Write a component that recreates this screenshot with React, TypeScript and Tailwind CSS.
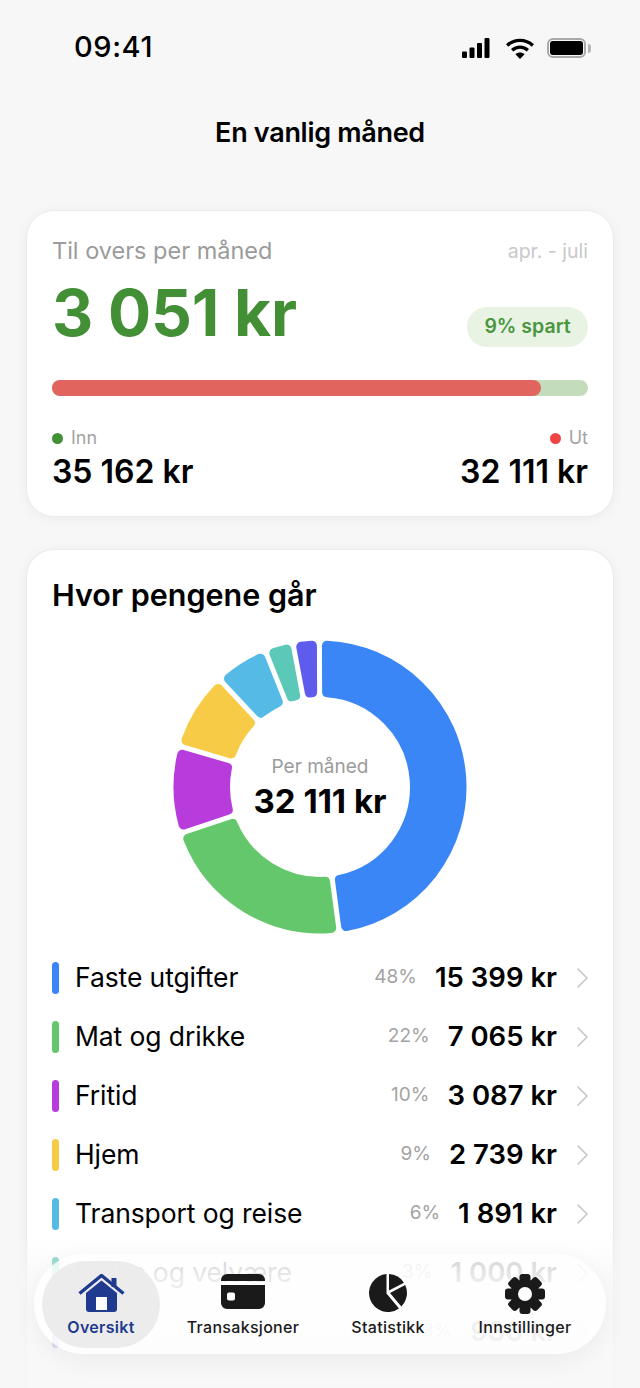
import React from 'react';

const categories = [
  { name: 'Faste utgifter', percent: '48%', amount: 15399, label: '15 399 kr', color: '#3b86f7', bar: 'bg-[#3b86f7]' },
  { name: 'Mat og drikke', percent: '22%', amount: 7065, label: '7 065 kr', color: '#65c76b', bar: 'bg-[#65c76b]' },
  { name: 'Fritid', percent: '10%', amount: 3087, label: '3 087 kr', color: '#b83bdb', bar: 'bg-[#b83bdb]' },
  { name: 'Hjem', percent: '9%', amount: 2739, label: '2 739 kr', color: '#f8cb46', bar: 'bg-[#f8cb46]' },
  { name: 'Transport og reise', percent: '6%', amount: 1891, label: '1 891 kr', color: '#55bbe6', bar: 'bg-[#55bbe6]' },
  { name: 'Helse og velvære', percent: '3%', amount: 1000, label: '1 000 kr', color: '#5cc8b8', bar: 'bg-[#5cc8b8]' },
  { name: 'Abo', percent: '3%', amount: 930, label: '930 kr', color: '#5e5ced', bar: 'bg-[#5e5ced]' },
];

const CX = 150;
const CY = 150;

function point(r: number, a: number) {
  return `${(CX + r * Math.sin(a)).toFixed(2)} ${(CY - r * Math.cos(a)).toFixed(2)}`;
}

// annular slice, pulled in so the round stroke gives soft corners
function slice(start: number, end: number) {
  const outer = 141.5;
  const inner = 95;
  const inset = 7.5;
  const a0 = start + Math.asin(inset / outer);
  const a1 = end - Math.asin(inset / outer);
  const b0 = start + Math.asin(inset / inner);
  const b1 = end - Math.asin(inset / inner);
  const large = a1 - a0 > Math.PI ? 1 : 0;
  return `M${point(outer, a0)} A${outer} ${outer} 0 ${large} 1 ${point(outer, a1)} L${point(inner, b1)} A${inner} ${inner} 0 ${large} 0 ${point(inner, b0)} Z`;
}

function Donut() {
  const total = categories.reduce((sum, c) => sum + c.amount, 0);
  let angle = -0.004;
  return (
    <svg width="300" height="300" viewBox="0 0 300 300">
      {categories.map((c) => {
        const start = angle;
        angle += (c.amount / total) * Math.PI * 2;
        return (
          <path key={c.name} d={slice(start, angle)} fill={c.color} stroke={c.color} strokeWidth="10" strokeLinejoin="round" />
        );
      })}
    </svg>
  );
}

function StatusIcons() {
  return (
    <div className="flex items-center">
      <svg width="28" height="20" viewBox="0 0 28 20" className="fill-black">
        <rect x="0" y="13.5" width="5" height="6.5" rx="1" />
        <rect x="7.5" y="9.5" width="5" height="10.5" rx="1" />
        <rect x="15" y="5" width="5" height="15" rx="1" />
        <rect x="22.5" y="0" width="5" height="20" rx="1" />
      </svg>
      <svg width="30" height="22" viewBox="0 0 32 24" fill="none" className="ml-[15px]">
        <path d="M2 9.2C9.8 1.8 22.2 1.8 30 9.2" stroke="#000" strokeWidth="3.6" />
        <path d="M7.4 14.4C12.2 9.9 19.8 9.9 24.6 14.4" stroke="#000" strokeWidth="3.6" />
        <path d="M16 24l-5-5.2c2.8-2.6 7.2-2.6 10 0z" fill="#000" />
      </svg>
      <div className="ml-[12px] flex items-center gap-[2px]">
        <div className="flex h-[20px] w-[39px] items-center justify-center rounded-[6px] border-2 border-[#a9a9a9]">
          <div className="h-[14px] w-[33px] rounded-[3px] bg-black" />
        </div>
        <div className="h-[9px] w-[3px] rounded-r-sm bg-[#b5b5b5]" />
      </div>
    </div>
  );
}

function HomeIcon() {
  return (
    <svg width="47" height="38" viewBox="0 0 47 38" fill="#1f3a8f">
      <path d="M1.5 19.5 L23.5 1.5 L45.5 19.5" fill="none" stroke="#1f3a8f" strokeWidth="3.4" />
      <rect x="33.5" y="4" width="5" height="9" />
      <path d="M23.5 6.5 L39 19 V35 a3 3 0 0 1 -3 3 H11 a3 3 0 0 1 -3 -3 V19 Z" />
      <rect x="18" y="23" width="11" height="13" fill="#ffffff" />
    </svg>
  );
}

function CardIcon() {
  return (
    <svg width="44" height="35" viewBox="0 0 44 35">
      <path d="M0 6a6 6 0 0 1 6-6h32a6 6 0 0 1 6 6v1H0z" fill="#1a1a1a" />
      <path fillRule="evenodd" d="M0 11h44v18a6 6 0 0 1-6 6H6a6 6 0 0 1-6-6z M6 20.5a2 2 0 0 1 2-2h4a2 2 0 0 1 2 2v4a2 2 0 0 1-2 2H8a2 2 0 0 1-2-2z" fill="#1a1a1a" />
    </svg>
  );
}

function PieIcon() {
  return (
    <svg width="38" height="38" viewBox="0 0 38 38" fill="#1a1a1a">
      <path d="M17.5 0.06 V19.6 L30 34.5 A19 19 0 1 1 17.5 0.06 Z" />
      <path d="M20 0.03 A19 19 0 0 1 35 8.7 L20 16.5 Z" />
      <path d="M36.2 11 A19 19 0 0 1 32.3 32.5 L21 19 Z" />
    </svg>
  );
}

function GearIcon() {
  return (
    <svg width="40" height="40" viewBox="0 0 40 40" fill="#1a1a1a">
      {[0, 45, 90, 135, 180, 225, 270, 315].map((deg) => (
        <rect key={deg} x="14.5" y="0" width="11" height="12" rx="3" transform={`rotate(${deg} 20 20)`} />
      ))}
      <circle cx="20" cy="20" r="14.5" />
      <circle cx="20" cy="20" r="7" fill="#ffffff" />
    </svg>
  );
}

function Chevron() {
  return (
    <svg width="11" height="20" viewBox="0 0 11 20" fill="none" className="ml-[20px]">
      <path d="M1 1 L10 10 L1 19" stroke="#c4c4c4" strokeWidth="1.5" strokeLinecap="round" strokeLinejoin="round" />
    </svg>
  );
}

export default function App() {
  return (
    <div
      className="relative h-[1388px] w-[640px] overflow-hidden bg-[#f7f7f7] text-black"
      style={{ fontFamily: 'Inter, "Noto Sans", sans-serif' }}
    >
      <div className="flex h-[94px] items-start justify-between pl-[74px] pr-[49px] pt-[30px]">
        <span className="text-[29px] leading-[34px] font-medium tracking-[0.6px]">09:41</span>
        <div className="mt-[7px]">
          <StatusIcons />
        </div>
      </div>
      <h1 className="text-center text-[27px] leading-[78px] font-semibold tracking-[-0.3px]">En vanlig måned</h1>

      <div className="mx-[26px] mt-[38px] h-[307px] rounded-[28px] border border-[#ebebeb] bg-white px-[25px] pt-[24px] shadow-[0_2px_12px_rgba(0,0,0,0.05)]">
        <div className="flex items-center justify-between">
          <span className="text-[23.5px] leading-[32px] text-[#9b9b9b]">Til overs per måned</span>
          <span className="text-[19.5px] leading-[32px] text-[#c9c9c9]">apr. - juli</span>
        </div>
        <div className="mt-[8px] flex items-end justify-between">
          <span className="text-[64px] leading-[76px] font-bold tracking-[-0.2px] text-[#428f35]">3 051 kr</span>
          <span className="mb-[4px] flex h-[40px] w-[121px] items-center justify-center rounded-full bg-[#e8f3e3] text-[19.5px] font-semibold text-[#4a9640]">9% spart</span>
        </div>
        <div className="mt-[29px] h-[16px] rounded-full bg-[#c3dcbb]">
          <div className="h-full w-[489px] rounded-full bg-[#e2645e]" />
        </div>
        <div className="mt-[28px] flex justify-between">
          <div>
            <div className="flex items-center gap-[8px]">
              <span className="h-[11px] w-[11px] rounded-full bg-[#428f35]" />
              <span className="text-[18px] leading-[28px] text-[#a3a3a3]">Inn</span>
            </div>
            <div className="mt-[1px] text-[32px] leading-[38px] font-semibold">35 162 kr</div>
          </div>
          <div className="flex flex-col items-end">
            <div className="flex items-center gap-[8px]">
              <span className="h-[11px] w-[11px] rounded-full bg-[#ef4444]" />
              <span className="text-[18px] leading-[28px] text-[#a3a3a3]">Ut</span>
            </div>
            <div className="mt-[1px] text-[32px] leading-[38px] font-semibold">32 111 kr</div>
          </div>
        </div>
      </div>

      <div className="mx-[26px] mt-[32px] h-[900px] rounded-[28px] border border-[#ebebeb] bg-white px-[25px] pt-[26px] shadow-[0_2px_12px_rgba(0,0,0,0.05)]">
        <h2 className="text-[30.5px] leading-[38px] font-semibold">Hvor pengene går</h2>
        <div className="relative mx-auto mt-[23px] h-[300px] w-[300px]">
          <Donut />
          <div className="absolute inset-0 flex flex-col items-center justify-center pt-[2px]">
            <span className="text-[19px] leading-[26px] text-[#9b9b9b]">Per måned</span>
            <span className="text-[33px] leading-[42px] font-bold">32 111 kr</span>
          </div>
        </div>
        <ul className="mt-[11px]">
          {categories.map((c) => (
            <li key={c.name} className="flex h-[59px] items-center">
              <span className={`h-[32px] w-[7px] rounded-full ${c.bar}`} />
              <span className="ml-[16px] flex-1 text-[26.5px] tracking-[-0.1px]">{c.name}</span>
              <span className="mr-[18px] text-[19px] text-[#a3a3a3]">{c.percent}</span>
              <span className="text-[27.5px] font-semibold">{c.label}</span>
              <Chevron />
            </li>
          ))}
        </ul>
      </div>

      <div className="pointer-events-none absolute inset-x-0 bottom-0 h-[155px] bg-gradient-to-b from-[#f7f7f7]/0 via-[#f7f7f7]/70 via-30% to-[#f7f7f7]/90" />

      <nav className="absolute left-[34px] top-[1254px] flex h-[100px] w-[572px] items-center rounded-full bg-white/75 pl-[8px] shadow-[0_8px_24px_rgba(0,0,0,0.05)]">
        <div className="flex h-[87px] w-[118px] flex-col items-center justify-end rounded-full bg-[#ebebeb]/95 pb-[11px]">
          <HomeIcon />
          <span className="mt-[5px] text-[16px] leading-[20px] font-semibold tracking-[0.3px] text-[#1f3a8f]">Oversikt</span>
        </div>
        <div className="flex h-[87px] w-[166px] flex-col items-center justify-end pb-[11px]">
          <CardIcon />
          <span className="mt-[8px] text-[16px] leading-[20px] font-medium tracking-[0.3px] text-[#1a1a1a]">Transaksjoner</span>
        </div>
        <div className="flex h-[87px] w-[124px] flex-col items-center justify-end pb-[11px]">
          <PieIcon />
          <span className="mt-[5px] text-[16px] leading-[20px] font-medium tracking-[0.3px] text-[#1a1a1a]">Statistikk</span>
        </div>
        <div className="flex h-[87px] w-[150px] flex-col items-center justify-end pb-[11px]">
          <GearIcon />
          <span className="mt-[3px] text-[16px] leading-[20px] font-medium tracking-[0.3px] text-[#1a1a1a]">Innstillinger</span>
        </div>
      </nav>
    </div>
  );
}
